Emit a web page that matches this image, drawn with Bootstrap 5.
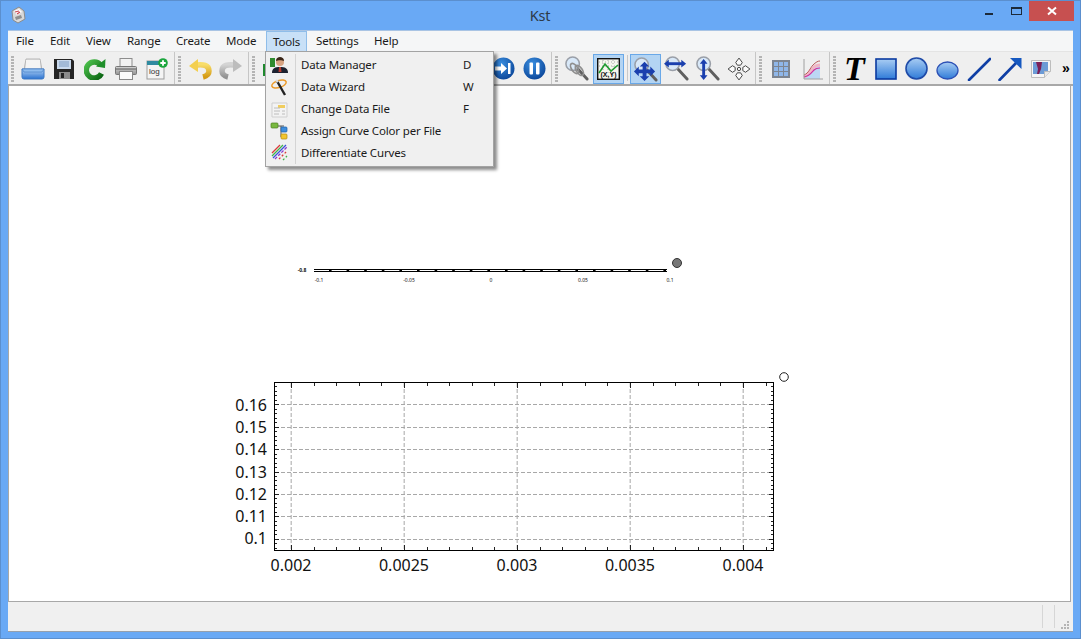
<!doctype html>
<html lang="en"><head><meta charset="utf-8"><title>Kst</title>
<link href="https://cdn.jsdelivr.net/npm/bootstrap@5.3.0/dist/css/bootstrap.min.css" rel="stylesheet">
<style>
html,body{height:100%;margin:0;overflow:hidden;background:#69a9f5}
body{font-family:"Noto Sans",sans-serif;font-size:11.5px;color:#1a1a1a}
.kwin{width:1081px;height:639px;border:1px solid #5b8fce;background:#69a9f5;position:relative}
.ktitle{height:29px;position:relative}
.ktitle-text{line-height:29px;font-size:14.5px;color:#2d3a48;letter-spacing:-.3px;padding-right:1px}
.kappicon{position:absolute;left:9px;top:5px}
.kctl{position:absolute;top:0;right:6px;height:20px}
.kclose{width:45px;height:20px;background:#c75050;color:#fff}
.kmax{width:26px;height:20px}
.kmin{width:26px;height:20px}
.kmin i{display:block;width:8px;height:2px;background:#1c2a3a;margin:12px 2px 0 0}
.kmax i{display:block;width:11px;height:8px;border:1px solid #1c2a3a;border-top-width:2px}
.kclient{position:absolute;left:7px;top:29px;width:1065px;height:602px;background:#f0f0f0;border-top:1px solid #a9c4e4;border-bottom:1px solid #96a0ac;display:flex;flex-direction:column}
.kmenubar{background:#f5f6f7;display:grid;grid-template-columns:34px 36px 41px 49px 50px 47px 43px 58px auto;position:relative;line-height:20px;padding-left:1px;border-bottom:1px solid #e4e4e4;box-sizing:content-box;height:20px}
.kmi{padding-left:7px;white-space:nowrap;letter-spacing:-.16px}
.kmi-on{background:#c8e0f7;border:1px solid #8fbde9;border-bottom:0;width:41px;padding-left:6px;line-height:19px;height:20px}
.kbar{background:#efefef;border-bottom:2px solid #a8a8a8;box-sizing:content-box;height:32px}
.kgrp{height:32px;border-right:1px solid #c6c6c6;flex:none}
.khandle{width:9px;height:32px;flex:none;padding:4px 0 0 3px}
.khandle i{display:block;width:3px;height:26px;background:repeating-linear-gradient(#b4b4b4 0 2px,transparent 2px 3px)}
.ktb{width:31px;height:31px;flex:none;margin-top:1px}
.ktb-on{background:#b3d4f3;border:1px solid #69a8e8;margin-top:2px;height:30px}
.ksp1{margin-left:1px}
.kvsep{width:1px;height:26px;background:#c8c8c8;margin:3px 2px 0 3px;flex:none}
.kpad2{padding-right:2px}
.kpad1{padding-right:1px}
.kgap{width:199px;flex:none}
.kt{font:italic bold 34px/30px "Liberation Serif",serif;color:#000}
.kmore{font:bold 14px/1 "Liberation Sans",sans-serif;color:#000;letter-spacing:-1px;padding-left:6px;padding-top:9px;width:20px;flex:none}
.kcanvas{background:#fff;border:solid #a8a8a8;border-width:0 1px 1px 1px;position:relative;flex:none;box-sizing:content-box;height:515px;margin-right:2px}
.kplot{position:absolute;left:0;top:0}
.kplot text{font-family:"Noto Sans",sans-serif;fill:#111}
.kstatus{flex:1;position:relative}
.kstatus i{position:absolute;top:3px;bottom:3px;width:1px;background:#d6d6d6}
.ks1{left:1034px}.ks2{left:1046px}
.kgrip{position:absolute;right:3px;bottom:1px}
.kmenu.dropdown-menu{position:absolute;display:block;left:257px;top:20px;width:229px;height:116px;background:#f0f0f0;border:1px solid #a3a3a3;border-radius:0;padding:2px 0 0;margin:0;box-shadow:3px 3px 3px rgba(0,0,0,.45);font-size:11.5px;min-width:0;z-index:5}
.kmenu::before{content:"";position:absolute;left:29px;top:2px;bottom:2px;width:1px;background:#d4d4d4}
.kmenu .dropdown-item{height:22px;padding:0;line-height:22px;color:#1a1a1a;display:flex;align-items:center;font-size:11.5px;letter-spacing:-.16px;background:none}
.kmi-ic{width:35px;flex:none;padding-left:4px;display:flex}
.kmi-lab{width:162px;flex:none}
.kshade{position:absolute;width:0;height:0;overflow:hidden}
</style></head><body>
<svg class="kshade" aria-hidden="true"><defs>
<linearGradient id="gb" x1="0" y1="0" x2="0" y2="1"><stop offset="0" stop-color="#b6d4f5"/><stop offset="1" stop-color="#2a72d0"/></linearGradient>
<linearGradient id="gg" x1="0" y1="0" x2="1" y2="1"><stop offset="0" stop-color="#4cc04c"/><stop offset="1" stop-color="#0a6412"/></linearGradient>
<linearGradient id="gy" x1="0" y1="0" x2="0" y2="1"><stop offset="0" stop-color="#f8dd6a"/><stop offset="1" stop-color="#d49a14"/></linearGradient>
<linearGradient id="ggr" x1="0" y1="0" x2="0" y2="1"><stop offset="0" stop-color="#d4d4d4"/><stop offset="1" stop-color="#929292"/></linearGradient>
<radialGradient id="gc" cx=".4" cy=".3" r=".8"><stop offset="0" stop-color="#3b8fe0"/><stop offset="1" stop-color="#063f93"/></radialGradient>
<linearGradient id="gs" x1="0" y1="0" x2="0" y2="1"><stop offset="0" stop-color="#a9cdf3"/><stop offset="1" stop-color="#2f7bd8"/></linearGradient>
<symbol id="mag" viewBox="0 0 26 26"><line x1="14" y1="13" x2="24" y2="24" stroke="#5f5f5f" stroke-width="3" stroke-linecap="round"/><circle cx="9" cy="8" r="7" fill="#d8e8f8" stroke="#9a9fa8" stroke-width="1.6"/></symbol>
</defs></svg>
<div class="kwin">
 <div class="ktitle d-flex justify-content-center">
  <svg class="kappicon" width="16" height="18" viewBox="0 0 16 18"><path d="M2 5 9 1l5 4 1 8-7 4-5-3z" fill="#d9d9d9" stroke="#8c8c8c"/><path d="M4 5l5-2 3 3-5 3z" fill="#fff"/><path d="M5 6l4-1M7 8l3-2" stroke="#c9474f" stroke-width="1.2"/><path d="M5 11l6-2 1 3-6 2z" fill="#8f8f8f"/></svg>
  <div class="ktitle-text">Kst</div>
  <div class="kctl d-flex">
   <div class="kmin d-flex justify-content-center"><i></i></div>
   <div class="kmax d-flex justify-content-center align-items-center"><i></i></div>
   <div class="kclose d-flex justify-content-center align-items-center"><svg width="10" height="10" viewBox="0 0 10 10"><path d="M1 1.5 9 8.5M9 1.5 1 8.5" stroke="#fff" stroke-width="2"/></svg></div>
  </div>
 </div>
 <div class="kclient">
  <div class="kmenubar">
   <div class="kmi">File</div><div class="kmi">Edit</div><div class="kmi">View</div><div class="kmi">Range</div><div class="kmi">Create</div><div class="kmi">Mode</div><div class="kmi kmi-on">Tools</div><div class="kmi">Settings</div><div class="kmi">Help</div>
   <div class="dropdown-menu kmenu show">
    <a class="dropdown-item"><span class="kmi-ic"><svg width="20" height="20" viewBox="0 0 20 20"><rect x="0" y="3" width="5" height="9" fill="#2f8a2f"/><path d="M2 18c0-5 3-6 8-6s8 1 8 6z" fill="#1c2230"/><path d="M9 12h2l.5 5h-3z" fill="#b73a2e"/><circle cx="10" cy="7" r="4" fill="#d8a482"/><path d="M6 6c0-3 2-4 4-4s4 1 4 4c-2-1-6-1-8 0z" fill="#3a2618"/></svg></span><span class="kmi-lab">Data Manager</span><span>D</span></a>
    <a class="dropdown-item"><span class="kmi-ic"><svg width="20" height="20" viewBox="0 0 20 20"><ellipse cx="9" cy="7" rx="7.5" ry="3.5" fill="none" stroke="#eb9a2a" stroke-width="1.5" transform="rotate(-18 9 7)"/><path d="M7 4 15 18" stroke="#222" stroke-width="2.4"/><path d="M6 3l2 2" stroke="#ddd" stroke-width="2.4"/></svg></span><span class="kmi-lab">Data Wizard</span><span>W</span></a>
    <a class="dropdown-item"><span class="kmi-ic"><svg width="20" height="20" viewBox="0 0 20 20"><path d="M2 4h15v14H2z" fill="#f3f3f3" stroke="#cfcfcf"/><path d="M8 6h7v3H8z" fill="#f0cd5e"/><path d="M4 9h6M4 12h6M4 15h5M12 12h3M12 15h3" stroke="#bcbcbc"/></svg></span><span class="kmi-lab">Change Data File</span><span>F</span></a>
    <a class="dropdown-item"><span class="kmi-ic"><svg width="20" height="20" viewBox="0 0 20 20"><path d="M6 5h8M11 5v11" stroke="#555" fill="none"/><rect x="1" y="2" width="7" height="5" rx="1" fill="#79b840" stroke="#4c7e20" stroke-width=".7"/><rect x="11" y="6" width="6" height="5" rx="1" fill="#3e8ede" stroke="#1e5fa8" stroke-width=".7"/><rect x="11" y="13" width="6" height="5" rx="1" fill="#f2c52f" stroke="#b68b10" stroke-width=".7"/></svg></span><span class="kmi-lab">Assign Curve Color per File</span></a>
    <a class="dropdown-item"><span class="kmi-ic"><svg width="20" height="20" viewBox="0 0 20 20" fill="none" stroke-width="1.3"><path d="M2 10 10 2" stroke="#d83a3a"/><path d="M2 13 13 2" stroke="#3fb24a"/><path d="M3 15 16 2" stroke="#3a52d8"/><path d="M5 16 17 4" stroke="#8a3ad0" stroke-dasharray="3 1.5"/><path d="M9 16l8-8" stroke="#d83a3a" stroke-dasharray="2 2"/><path d="M13 17l4-4" stroke="#3fb24a" stroke-dasharray="2 2"/></svg></span><span class="kmi-lab">Differentiate Curves</span></a>
   </div>
  </div>
  <div class="kbar d-flex">
   <div class="kgrp d-flex kpad2">
    <div class="khandle"><i></i></div>
    <div class="ktb d-flex align-items-center justify-content-center"><svg width="24" height="24" viewBox="0 0 24 24"><path d="M5 2h14l2 11H3z" fill="#e4e4e4" stroke="#b5b5b5"/><path d="M5 3h14v8H5z" fill="#f4f4f4"/><path d="M1 12h22v8a2 2 0 0 1-2 2H3a2 2 0 0 1-2-2z" fill="url(#gb)" stroke="#3c78c4"/><path d="M1 12h22l-2 3H3z" fill="#8fbcee" stroke="#3c78c4" stroke-width=".6"/></svg></div>
    <div class="ktb d-flex align-items-center justify-content-center"><svg width="22" height="22" viewBox="0 0 22 22"><path d="M1 1h18l2 2v18H1z" fill="#252525"/><rect x="4" y="2" width="14" height="9" fill="#c9d9ec"/><path d="M6 4h10M6 6h10M6 8h10" stroke="#7d9bc2"/><rect x="6" y="14" width="11" height="7" fill="#8a8a8a"/><rect x="8" y="15" width="3" height="5" fill="#222"/></svg></div>
    <div class="ktb d-flex align-items-center justify-content-center"><svg width="22" height="22" viewBox="0 0 22 22"><path d="M16.500 7A8 8 0 1 0 17.500 15.500" fill="none" stroke="url(#gg)" stroke-width="5.500"/><path d="M12 8.500 21 10 21.500 1z" fill="#1f8f2a"/></svg></div>
    <div class="ktb d-flex align-items-center justify-content-center"><svg width="24" height="24" viewBox="0 0 24 24"><rect x="6" y="1.500" width="12" height="9" fill="#f2f2f2" stroke="#8d8d8d"/><rect x="1.500" y="9.500" width="21" height="8" rx="1" fill="url(#ggr)" stroke="#777"/><rect x="5.500" y="14.500" width="13" height="8" fill="#fafafa" stroke="#888"/><path d="M2 12h20" stroke="#5f5f5f"/></svg></div>
    <div class="ktb d-flex align-items-center justify-content-center"><svg width="22" height="22" viewBox="0 0 22 22"><rect x="1" y="3" width="17" height="18" fill="#f4f4f4" stroke="#9d9d9d"/><rect x="1" y="3" width="17" height="4" fill="#2f8aa0"/><text x="3" y="16" font-size="8" font-family="Liberation Sans" fill="#333">log</text><circle cx="17" cy="5" r="4.800" fill="#1aa53c"/><path d="M17 2.300v5.400M14.300 5h5.400" stroke="#fff" stroke-width="1.800"/></svg></div>
   </div>
   <div class="kgrp d-flex kpad2">
    <div class="khandle"><i></i></div>
    <div class="ktb d-flex align-items-center justify-content-center"><svg width="24" height="22" viewBox="0 0 24 22"><path d="M8 7c7-1 13 0 13 6 0 3-2 5-6 6" fill="none" stroke="url(#gy)" stroke-width="5.500"/><path d="M1 8 10 1v13z" fill="#f3cf4f"/></svg></div>
    <div class="ktb d-flex align-items-center justify-content-center"><svg width="24" height="22" viewBox="0 0 24 22"><path d="M16 7C9 6 3 7 3 13c0 3 2 5 6 6" fill="none" stroke="url(#ggr)" stroke-width="5.500"/><path d="M23 8 14 1v13z" fill="#bdbdbd"/></svg></div>
   </div>
   <div class="kgrp d-flex kpad1">
    <div class="khandle"><i></i></div>
    <div class="ktb d-flex align-items-center justify-content-center"><svg width="24" height="24" viewBox="0 0 24 24"><rect x="1" y="7" width="20" height="12" fill="#1f8a2e"/></svg></div>
    <div class="kgap"></div>
    <div class="ktb d-flex align-items-center justify-content-center"><svg width="23" height="23" viewBox="0 0 23 23"><circle cx="11.500" cy="11.500" r="11" fill="url(#gc)"/><path d="M3 9.500h6V6l6 5.500-6 5.500v-3.500H3z" fill="#fff"/><rect x="16" y="6" width="2.500" height="11" fill="#fff"/></svg></div>
    <div class="ktb d-flex align-items-center justify-content-center"><svg width="23" height="23" viewBox="0 0 23 23"><circle cx="11.500" cy="11.500" r="11" fill="url(#gc)"/><rect x="6.500" y="5.500" width="3.500" height="12" rx="1" fill="#fff"/><rect x="13" y="5.500" width="3.500" height="12" rx="1" fill="#fff"/></svg></div>
   </div>
   <div class="kgrp d-flex kpad1">
    <div class="khandle"><i></i></div>
    <div class="ktb d-flex align-items-center justify-content-center"><svg width="25" height="25" viewBox="0 0 26 26"><use href="#mag" width="26" height="26"/><g fill="none" stroke="#8f8f8f" stroke-width="1.800"><ellipse cx="11" cy="13" rx="3" ry="6" transform="rotate(-35 11 13)"/><ellipse cx="16" cy="15" rx="3" ry="6" transform="rotate(-35 16 15)"/></g></svg></div>
    <div class="ktb ktb-on ksp1 d-flex align-items-center justify-content-center"><svg width="23" height="22" viewBox="0 0 23 22"><rect x=".5" y=".5" width="22" height="21" fill="#f6f6ee" stroke="#111" stroke-width="1.800"/><path d="M2 4h19M2 8h19M6 2v18M11 2v18M16 2v18" stroke="#aaa" stroke-dasharray="1 2"/><path d="M2 15l6-9 6 7 7-6" fill="none" stroke="#1f9a2f" stroke-width="1.600"/><text x="11.500" y="19" text-anchor="middle" font-size="7" font-weight="700" font-family="Liberation Sans" fill="#111">(X,Y)</text></svg></div>
    <div class="kvsep"></div>
    <div class="ktb ktb-on d-flex align-items-center justify-content-center"><svg width="25" height="25" viewBox="0 0 26 26"><use href="#mag" width="26" height="26"/><path d="M12 8v14M4 15h16" stroke="#1a3fae" stroke-width="4"/><path d="M12 5l5 5H7zM12 25l5-5H7zM1 15l5-5v10zM23 15l-5-5v10z" fill="#1a3fae"/></svg></div>
    <div class="ktb d-flex align-items-center justify-content-center"><svg width="25" height="25" viewBox="0 0 26 26"><use href="#mag" width="26" height="26"/><path d="M4 8h15" stroke="#1a3fae" stroke-width="3"/><path d="M0 8l5-4v8zM23 8l-5-4v8z" fill="#1a3fae"/></svg></div>
    <div class="ktb d-flex align-items-center justify-content-center"><svg width="25" height="25" viewBox="0 0 26 26"><use href="#mag" width="26" height="26"/><path d="M9 6v15" stroke="#1a3fae" stroke-width="3"/><path d="M9 3l4 5H5zM9 25l4-5H5z" fill="#1a3fae"/></svg></div>
    <div class="ktb d-flex align-items-center justify-content-center"><svg width="24" height="24" viewBox="0 0 22 22" fill="#fafafa" stroke="#444" stroke-width=".9"><path d="M11 1l3 4-1.500 2.500h-3L8 5zM11 21l3-4-1.500-2.500h-3L8 17zM1 11l4-3 2.500 1.500v3L5 14zM21 11l-4-3-2.500 1.500v3L17 14z"/><circle cx="11" cy="11" r="1.500"/></svg></div>
   </div>
   <div class="kgrp d-flex kpad2">
    <div class="khandle"><i></i></div>
    <div class="ktb d-flex align-items-center justify-content-center"><svg width="20" height="20" viewBox="0 0 20 20"><rect x="1" y="1" width="18" height="18" fill="#7d8591"/><path d="M3 3h4v4H3zM8 3h4v4H8zM13 3h4v4h-4zM3 8h4v4H3zM8 8h4v4H8zM13 8h4v4h-4zM3 13h4v4H3zM8 13h4v4H8zM13 13h4v4h-4z" fill="#8fb7ea"/></svg></div>
    <div class="ktb d-flex align-items-center justify-content-center"><svg width="22" height="22" viewBox="0 0 22 22"><path d="M3 21V19c6-1 8-5 10-8s4-3 6-3v13z" fill="#bcd7f4"/><path d="M3 19c5-2 6-6 9-9s5-3 7-3" fill="none" stroke="#f1b6c6" stroke-width="3"/><path d="M3 17c5-2 6-7 9-10s5-4 7-4" fill="none" stroke="#b75a5a"/><path d="M3 19c6-1 8-5 10-7s4-2 6-2" fill="none" stroke="#d030a0" stroke-width="1.200"/><path d="M3 1v20h19" fill="none" stroke="#a0a0a0"/></svg></div>
   </div>
   <div class="d-flex">
    <div class="khandle"><i></i></div>
    <div class="ktb d-flex align-items-center justify-content-center kt">T</div>
    <div class="ktb d-flex align-items-center justify-content-center"><svg width="22" height="22" viewBox="0 0 22 22"><rect x="1" y="1" width="20" height="20" fill="url(#gs)" stroke="#0a3aa0" stroke-width="1.600"/></svg></div>
    <div class="ktb d-flex align-items-center justify-content-center"><svg width="23" height="23" viewBox="0 0 23 23"><circle cx="11.500" cy="11.500" r="10.500" fill="url(#gs)" stroke="#1f4ba8" stroke-width="1.600"/></svg></div>
    <div class="ktb d-flex align-items-center justify-content-center"><svg width="23" height="19" viewBox="0 0 23 19" class="mt-1"><ellipse cx="11.500" cy="9.500" rx="10.500" ry="8.500" fill="url(#gs)" stroke="#2c50b5" stroke-width="1.300"/></svg></div>
    <div class="ktb d-flex align-items-center justify-content-center"><svg width="24" height="24" viewBox="0 0 24 24"><path d="M2 23 23 2" stroke="#0f3fa5" stroke-width="2.600" stroke-linecap="round"/></svg></div>
    <div class="ktb d-flex align-items-center justify-content-center"><svg width="24" height="24" viewBox="0 0 24 24"><path d="M1.500 23 19 5" stroke="#0f3fa5" stroke-width="2.600" stroke-linecap="round"/><path d="M12 1h11.500v11z" fill="#1658c0"/></svg></div>
    <div class="ktb d-flex align-items-center justify-content-center"><svg width="22" height="20" viewBox="0 0 22 20"><path d="M1.500 1.500h19v11l-6 6h-13z" fill="#f6f6f6" stroke="#bdbdbd"/><rect x="3" y="3" width="15" height="12" fill="#6c9bd6"/><path d="M6 3h6l-1 7-2 5H7l1-5z" fill="#7b1f57"/><path d="M14.500 18.500v-6h6" fill="#e8e8e8" stroke="#bdbdbd"/></svg></div>
    <div class="kmore">&raquo;</div>
   </div>
  </div>
  <div class="kcanvas">
   <svg id="kp" class="kplot" width="1061" height="515" viewBox="9 86 1061 515">
    <rect x="314" y="269" width="353" height="3" fill="#000"/>
    <line x1="314" y1="270.500" x2="667" y2="270.500" stroke="#fff" stroke-width="1" stroke-dasharray="15 2.600"/>
    <g font-size="5" text-anchor="middle">
     <text x="302" y="272" font-weight="700">-0.8</text>
     <text x="319" y="282">-0.1</text><text x="409" y="282">-0.05</text><text x="491" y="282">0</text><text x="583" y="282">0.05</text><text x="670" y="282">0.1</text>
    </g>
    <circle cx="677" cy="263" r="4.500" fill="#777" stroke="#333"/>
    <g id="kgrid"></g>
    <rect x="274.500" y="382.500" width="499" height="168" fill="none" stroke="#000"/>
    <circle cx="784" cy="377" r="4.300" fill="#fff" stroke="#222"/>
    <g font-size="16" text-anchor="end">
     <text x="267" y="411">0.16</text><text x="267" y="433">0.15</text><text x="267" y="455">0.14</text><text x="267" y="478">0.13</text><text x="267" y="500">0.12</text><text x="267" y="522">0.11</text><text x="267" y="544">0.1</text>
    </g>
    <g font-size="16" text-anchor="middle">
     <text x="291" y="571">0.002</text><text x="404" y="571">0.0025</text><text x="517" y="571">0.003</text><text x="630" y="571">0.0035</text><text x="743" y="571">0.004</text>
    </g>
   </svg>
  </div>
  <div class="kstatus">
   <i class="ks1"></i><i class="ks2"></i>
   <svg class="kgrip" width="9" height="9" viewBox="0 0 9 9" fill="#b5b5b5"><rect x="6" y="0" width="2" height="2"/><rect x="3" y="3" width="2" height="2"/><rect x="6" y="3" width="2" height="2"/><rect x="0" y="6" width="2" height="2"/><rect x="3" y="6" width="2" height="2"/><rect x="6" y="6" width="2" height="2"/></svg>
  </div>
 </div>
</div>
<script>
(function(){
 var g=document.getElementById('kgrid'),ns='http://www.w3.org/2000/svg';
 function L(x1,y1,x2,y2,c,d,w){var l=document.createElementNS(ns,'line');l.setAttribute('x1',x1);l.setAttribute('y1',y1);l.setAttribute('x2',x2);l.setAttribute('y2',y2);l.setAttribute('stroke',c);if(d)l.setAttribute('stroke-dasharray',d);if(w)l.setAttribute('stroke-width',w);g.appendChild(l);}
 var i,x,y;
 for(i=0;i<5;i++){x=Math.round(291+113*i)+.25;L(x,383,x,550,'#c4c4c4','4 2',1.5);}
 for(i=0;i<7;i++){y=Math.round(404.3+22.4*i)+.5;L(275,y,773,y,'#a8a8a8','4 2');}
 for(i=-1;i<22;i++){x=Math.round(291+22.6*i)+.5;if(x<275||x>773)continue;var m=i%5==0?5:3;L(x,383,x,383+m,'#222');L(x,550,x,550-m,'#222');}
 for(i=-5;i<34;i++){y=Math.round(404.3+4.48*i)+.5;if(y<383||y>550)continue;var n=i%5==0?4:2;L(275,y,275+n,y,'#222');L(773,y,773-n,y,'#222');}
})();
</script>
<script src="https://cdn.jsdelivr.net/npm/bootstrap@5.3.0/dist/js/bootstrap.bundle.min.js"></script>
</body></html>
